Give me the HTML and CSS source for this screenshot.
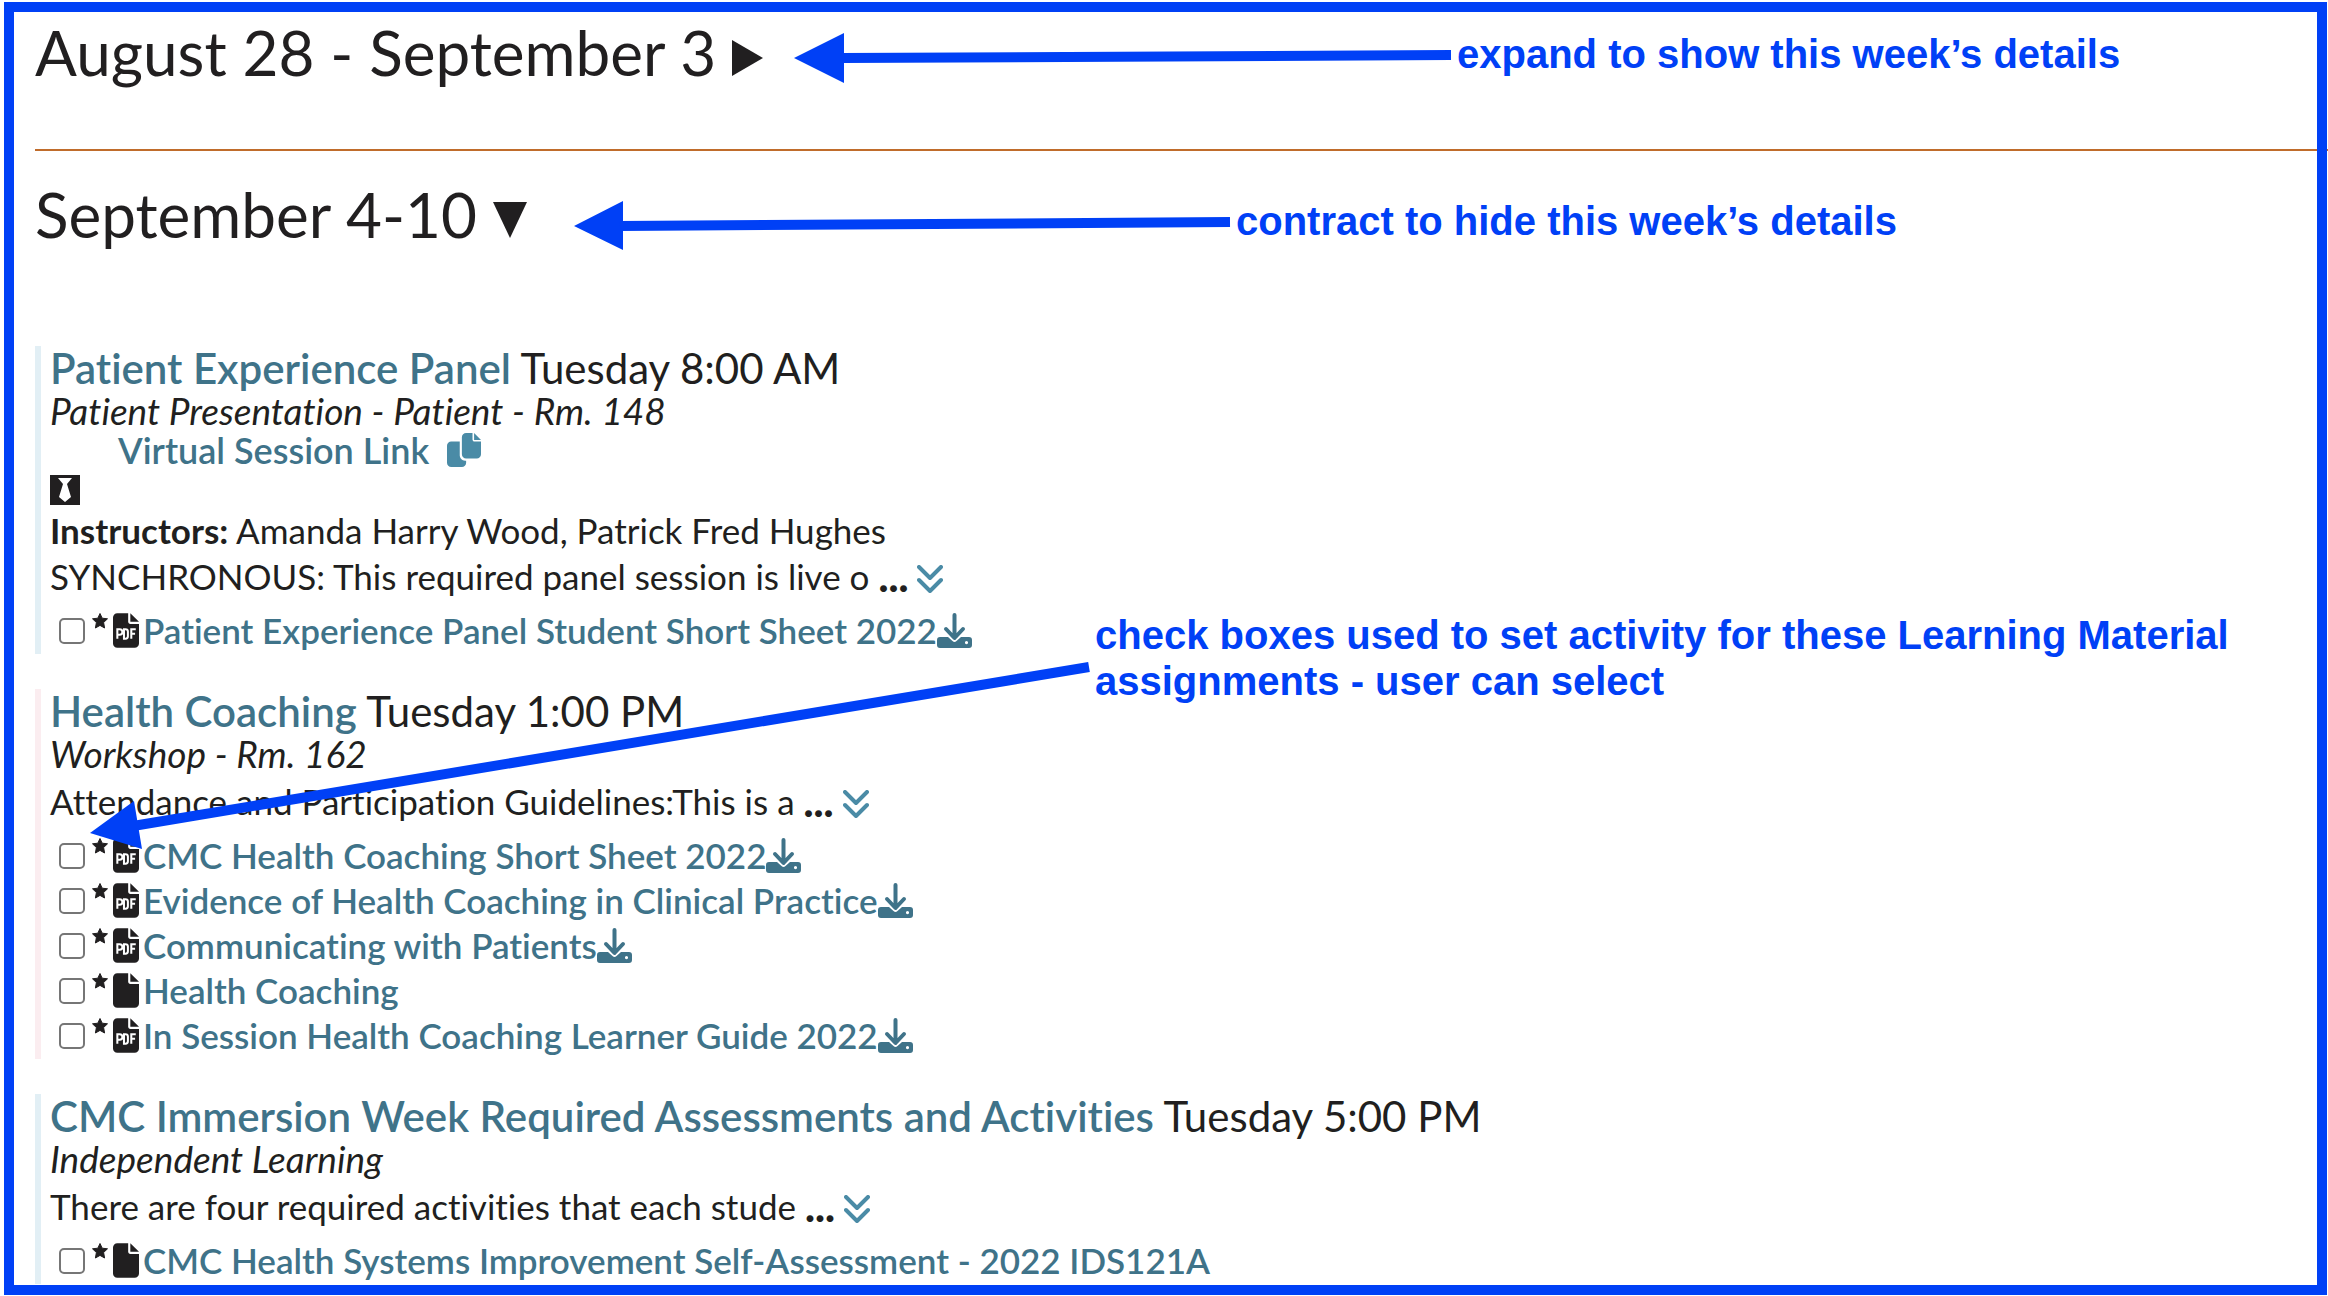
FILE: index.html
```html
<!DOCTYPE html>
<html lang="en">
<head>
<meta charset="utf-8">
<title>Weekly Events</title>
<link rel="stylesheet" href="styles.css">
</head>
<body>
<svg class="sprite" aria-hidden="true">
  <symbol id="star" viewBox="0 0 16 16"><path stroke="currentColor" stroke-linejoin="round" d="M8 .5l2.200 4.700 5.300.6-3.900 3.700 1 5.500L8 12.400l-4.600 2.600 1-5.500L.5 5.800l5.300-.6z"/></symbol>
  <symbol id="file" viewBox="0 0 384 512"><path d="M0 64C0 28.700 28.700 0 64 0H224V128c0 17.700 14.300 32 32 32H384V448c0 35.300-28.700 64-64 64H64c-35.300 0-64-28.700-64-64V64zM384 128H256V0L384 128z"/></symbol>
  <symbol id="pdf" viewBox="0 0 384 512">
    <path d="M0 64C0 28.700 28.700 0 64 0H224V128c0 17.700 14.300 32 32 32H384V448c0 35.300-28.700 64-64 64H64c-35.300 0-64-28.700-64-64V64zM384 128H256V0L384 128z"/>
    <path class="cut" d="M64 378V236h34a38 38 0 0 1 0 82H64M162 236v142h22a36 36 0 0 0 36-36v-70a36 36 0 0 0-36-36zM270 378V236h66M270 304h56"/>
  </symbol>
  <symbol id="copy" viewBox="0 0 512 512"><path d="M288 0H384V96c0 18 14 32 32 32h96V320c0 35-29 64-64 64H288c-35 0-64-29-64-64V64c0-35 29-64 64-64zM408 0l104 104H408zM64 128H192V336c0 44 36 80 80 80h16v32c0 35-29 64-64 64H64c-35 0-64-29-64-64V192c0-35 29-64 64-64z"/></symbol>
  <symbol id="down" viewBox="0 0 26 28"><path class="line" d="M2 2l11 11L24 2M2 15l11 11L24 15"/></symbol>
  <symbol id="download" viewBox="0 0 35 35">
    <path class="line" d="M17.500 2v22M9 16l8.500 9 8.500-9"/>
    <path fill-rule="evenodd" d="M3 24h8l4.500 4a3 3 0 0 0 4 0l4.500-4h8a3 3 0 0 1 3 3v5a3 3 0 0 1-3 3H3a3 3 0 0 1-3-3v-5a3 3 0 0 1 3-3zM29.500 28a1.600 1.600 0 1 0 0 3.200 1.600 1.600 0 0 0 0-3.200z"/>
  </symbol>
</svg>

<main class="weeks">
  <section class="week">
    <h2><button type="button" class="toggle" aria-expanded="false">August 28 - September 3
      <svg class="caret" viewBox="0 0 34 36"><path d="M0 0l31 18L0 36z"/></svg></button></h2>
  </section>
  <section class="week">
    <h2><button type="button" class="toggle" aria-expanded="true">September 4-10
      <svg class="caret" viewBox="0 0 34 36"><path d="M0 0h34L17 36z"/></svg></button></h2>

    <div class="events">
      <article class="event">
        <h3><a href="#">Patient Experience Panel</a> Tuesday 8:00 AM</h3>
        <p class="place">Patient Presentation - Patient - Rm. 148</p>
        <p class="virtual"><a href="#">Virtual Session Link</a><button type="button" class="icon" aria-label="Copy link"><svg class="copy"><use href="#copy"/></svg></button></p>
        <p class="attire"><svg viewBox="0 0 30 30" role="img" aria-label="Special attire required"><path d="M0 0h30v30H0z"/><path fill="#fff" d="M8 3h14l-5 6 4 13-6 5-6-5 4-13z"/></svg></p>
        <p class="people"><b>Instructors:</b> Amanda Harry Wood, Patrick Fred Hughes</p>
        <p class="summary">SYNCHRONOUS: This required panel session is live o <b class="dots">...</b><button type="button" class="icon" aria-label="Show more"><svg class="down"><use href="#down"/></svg></button></p>
        <ul class="materials">
          <li><input type="checkbox" id="m1"><svg class="star"><use href="#star"/></svg><svg class="file"><use href="#pdf"/></svg><label for="m1"><a href="#">Patient Experience Panel Student Short Sheet 2022</a></label><a href="#" aria-label="Download"><svg class="download"><use href="#download"/></svg></a></li>
        </ul>
      </article>

      <article class="event rose">
        <h3><a href="#">Health Coaching</a> Tuesday 1:00 PM</h3>
        <p class="place">Workshop - Rm. 162</p>
        <p class="summary">Attendance and Participation Guidelines:This is a <b class="dots">...</b><button type="button" class="icon" aria-label="Show more"><svg class="down"><use href="#down"/></svg></button></p>
        <ul class="materials">
          <li><input type="checkbox" id="m2"><svg class="star"><use href="#star"/></svg><svg class="file"><use href="#pdf"/></svg><label for="m2"><a href="#">CMC Health Coaching Short Sheet 2022</a></label><a href="#" aria-label="Download"><svg class="download"><use href="#download"/></svg></a></li>
          <li><input type="checkbox" id="m3"><svg class="star"><use href="#star"/></svg><svg class="file"><use href="#pdf"/></svg><label for="m3"><a href="#">Evidence of Health Coaching in Clinical Practice</a></label><a href="#" aria-label="Download"><svg class="download"><use href="#download"/></svg></a></li>
          <li><input type="checkbox" id="m4"><svg class="star"><use href="#star"/></svg><svg class="file"><use href="#pdf"/></svg><label for="m4"><a href="#">Communicating with Patients</a></label><a href="#" aria-label="Download"><svg class="download"><use href="#download"/></svg></a></li>
          <li><input type="checkbox" id="m5"><svg class="star"><use href="#star"/></svg><svg class="file"><use href="#file"/></svg><label for="m5"><a href="#">Health Coaching</a></label></li>
          <li><input type="checkbox" id="m6"><svg class="star"><use href="#star"/></svg><svg class="file"><use href="#pdf"/></svg><label for="m6"><a href="#">In Session Health Coaching Learner Guide 2022</a></label><a href="#" aria-label="Download"><svg class="download"><use href="#download"/></svg></a></li>
        </ul>
      </article>

      <article class="event">
        <h3><a href="#">CMC Immersion Week Required Assessments and Activities</a> Tuesday 5:00 PM</h3>
        <p class="place">Independent Learning</p>
        <p class="summary">There are four required activities that each stude <b class="dots">...</b><button type="button" class="icon" aria-label="Show more"><svg class="down"><use href="#down"/></svg></button></p>
        <ul class="materials">
          <li><input type="checkbox" id="m7"><svg class="star"><use href="#star"/></svg><svg class="file"><use href="#file"/></svg><label for="m7"><a href="#">CMC Health Systems Improvement Self-Assessment - 2022 IDS121A</a></label></li>
        </ul>
      </article>
    </div>
  </section>
</main>

<div class="notes">
  <svg class="arrows" aria-hidden="true">
    <path d="M794 58l50-25v50zM574 226l49-25v49zM90 833l44-32 8 48z"/>
    <path class="shaft" d="M842 58L1451 55M620 226L1230 222M136 825.500L1089 667"/>
  </svg>
  <p class="note expand">expand to show this week’s details</p>
  <p class="note contract">contract to hide this week’s details</p>
  <p class="note boxes">check boxes used to set activity for these Learning Material<br>assignments - user can select</p>
</div>
</body>
</html>
```
FILE: styles.css
```css
* { box-sizing: border-box; }

body {
  position: relative;
  min-height: 100vh;
  margin: 0;
  background: #fff;
  color: #211f20;
  font-family: Lato, "Open Sans", sans-serif;
  font-size: 35px;
  font-variant-ligatures: none;
}

h2, h3, p, ul { margin: 0; padding: 0; font-weight: 400; }
a { color: #3f7389; font-weight: 600; text-decoration: none; }
button { padding: 0; border: 0; background: none; color: inherit; font: inherit; cursor: pointer; }
svg { flex: none; fill: currentColor; }
.sprite { display: none; }
.line { fill: none; stroke: currentColor; stroke-width: 4; stroke-linecap: round; stroke-linejoin: round; }
.cut { fill: none; stroke: #fff; stroke-width: 30; }

.weeks { padding: 16px 0 0 35px; }
.week + .week { margin-top: 61px; padding-top: 27px; border-top: 2px solid #c06c2b; }
.week h2 { font-size: 62px; line-height: 72px; }
.toggle { display: flex; align-items: center; gap: 16px; font-variant-ligatures: none; }
.caret { width: 34px; height: 36px; margin-top: 12px; }

.events { display: flex; flex-direction: column; gap: 35px; margin-top: 96px; }
.event { padding: 0 0 2px 9px; border-left: 6px solid #e2eff5; }
.event.rose { border-left-color: #fbedf0; }
.event h3 { font-size: 42px; line-height: 44px; }
.place { font-size: 37px; line-height: 42px; font-style: italic; }
.virtual { display: flex; align-items: center; gap: 18px; padding-left: 68px; font-size: 36px; line-height: 36px; }
.attire { display: flex; align-items: center; height: 44px; }
.attire svg { width: 30px; height: 30px; }
.people { margin-bottom: 2px; line-height: 36px; }
.people b { font-weight: 700; }
.summary { display: flex; align-items: center; gap: 9px; line-height: 52px; }
.dots { font-size: 42px; font-weight: 900; }
.icon { display: flex; color: #4a8ba6; }
.copy { width: 34px; height: 34px; }
.down { width: 26px; height: 28px; margin-top: 6px; }

.materials { margin-top: 5px; list-style: none; }
.materials li { display: flex; align-items: center; height: 45px; padding: 2px 0 0 9px; }
.materials input {
  appearance: none;
  width: 26px;
  height: 26px;
  margin: 0 7px 0 0;
  border: 2px solid #767676;
  border-radius: 5px;
  background: #fff;
}
.materials label { padding-bottom: 2px; }
.materials a { display: flex; }
.star { width: 16px; height: 16px; align-self: flex-start; margin: 4px 5px 0 0; }
.file { width: 26px; height: 35px; margin-right: 4px; }
.download { width: 35px; height: 35px; }

/* Instructional overlay: frame, arrows and captions */
.notes {
  position: absolute;
  inset: 2px 1px 1px 4px;
  border: 10px solid #0040f6;
  color: #0040f6;
  pointer-events: none;
}
.arrows { position: absolute; left: -14px; top: -12px; width: 1200px; height: 900px; overflow: visible; }
.shaft { fill: none; stroke: currentColor; stroke-width: 10; }
.note {
  position: absolute;
  font: bold 40px/46px "Liberation Sans", Arial, sans-serif;
  white-space: nowrap;
}
.expand { left: 1443px; top: 19px; }
.contract { left: 1222px; top: 186px; }
.boxes { left: 1081px; top: 600px; }
```
